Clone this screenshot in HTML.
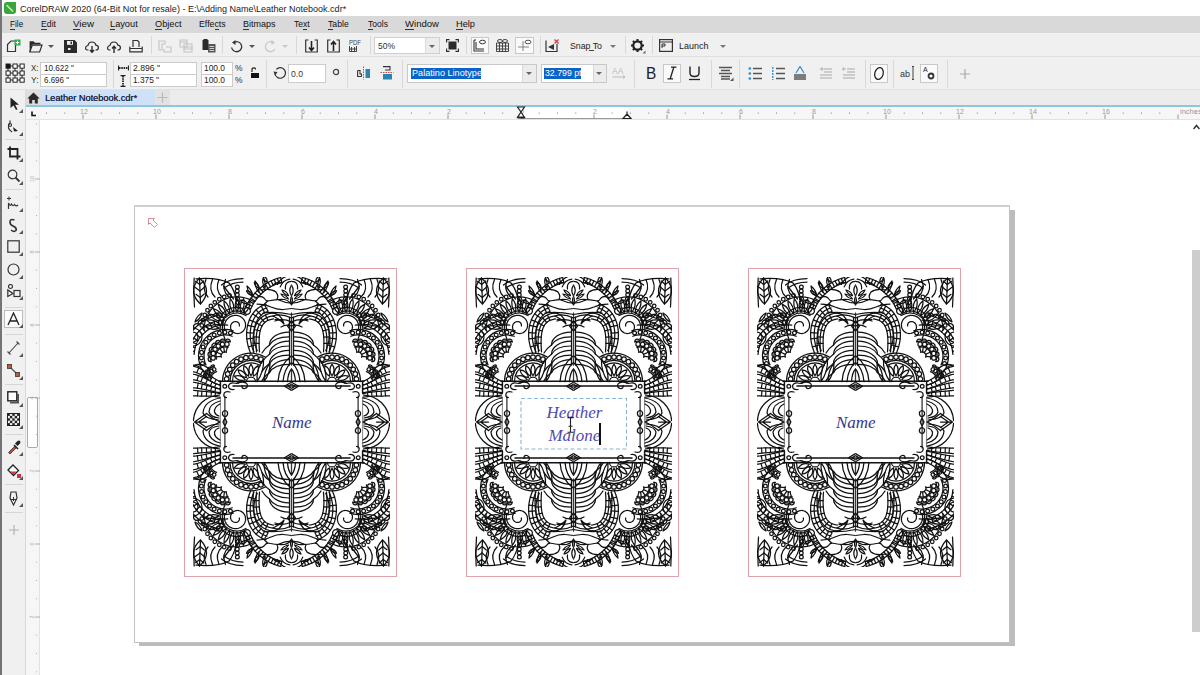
<!DOCTYPE html><html><head><meta charset="utf-8"><style>
*{margin:0;padding:0;box-sizing:border-box}
html,body{width:1200px;height:675px;overflow:hidden;background:#fff;font-family:"Liberation Sans",sans-serif;color:#222}
.a{position:absolute}
.t{position:absolute;white-space:nowrap;line-height:1}
.sep{position:absolute;width:1px;background:#d8d8d8}
.dd{width:0;height:0;border-left:3.5px solid transparent;border-right:3.5px solid transparent;border-top:3.5px solid #555}
.field{position:absolute;background:#fff;border:1px solid #cbcbcb;font-size:9.5px;color:#333;padding-left:3px;line-height:11px;white-space:nowrap}
.menu span{position:absolute;top:4px;font-size:9px;color:#111;line-height:1}
.menu u{text-decoration:none;border-bottom:1px solid #111;display:inline-block;line-height:7px}
</style></head><body>
<div class="a" style="left:0;top:0;width:1200px;height:16px;background:#fff"></div>
<svg class="a" style="left:4px;top:2px" width="12" height="12"><path d="M0 3Q0 0 3 0H12V9Q12 12 9 12H3Q0 12 0 9Z" fill="#3aa63a"/><path d="M3 3.5L8.5 9" stroke="#c9f0c2" stroke-width="1.6" stroke-linecap="round"/></svg>
<div class="t" style="left:20.0px;top:4.58px;font-size:9.00px;color:#222;transform:scaleX(1.001);transform-origin:0 0;">CorelDRAW 2020 (64-Bit Not for resale) - E:\Adding Name\Leather Notebook.cdr*</div>
<div class="a" style="left:0;top:16px;width:1200px;height:17px;background:#d9d9d9"></div>
<div class="t" style="left:10.0px;top:20.28px;font-size:9.00px;color:#111;transform:scaleX(0.917);transform-origin:0 0;">File</div>
<div class="a" style="left:10.0px;top:29px;width:5.0px;height:1px;background:#333"></div>
<div class="t" style="left:41.0px;top:20.28px;font-size:9.00px;color:#111;transform:scaleX(0.967);transform-origin:0 0;">Edit</div>
<div class="a" style="left:41.0px;top:29px;width:5.8px;height:1px;background:#333"></div>
<div class="t" style="left:73.0px;top:20.28px;font-size:9.00px;color:#111;transform:scaleX(1.086);transform-origin:0 0;">View</div>
<div class="a" style="left:73.0px;top:29px;width:6.5px;height:1px;background:#333"></div>
<div class="t" style="left:110.0px;top:20.28px;font-size:9.00px;color:#111;transform:scaleX(1.025);transform-origin:0 0;">Layout</div>
<div class="a" style="left:110.0px;top:29px;width:5.1px;height:1px;background:#333"></div>
<div class="t" style="left:155.0px;top:20.28px;font-size:9.00px;color:#111;transform:scaleX(1.026);transform-origin:0 0;">Object</div>
<div class="a" style="left:155.0px;top:29px;width:7.2px;height:1px;background:#333"></div>
<div class="t" style="left:199.0px;top:20.28px;font-size:9.00px;color:#111;transform:scaleX(0.976);transform-origin:0 0;">Effects</div>
<div class="a" style="left:214.5px;top:29px;width:4.4px;height:1px;background:#333"></div>
<div class="t" style="left:243.0px;top:20.28px;font-size:9.00px;color:#111;transform:scaleX(0.997);transform-origin:0 0;">Bitmaps</div>
<div class="a" style="left:243.0px;top:29px;width:6.0px;height:1px;background:#333"></div>
<div class="t" style="left:294.0px;top:20.28px;font-size:9.00px;color:#111;transform:scaleX(0.951);transform-origin:0 0;">Text</div>
<div class="a" style="left:303.0px;top:29px;width:4.3px;height:1px;background:#333"></div>
<div class="t" style="left:328.0px;top:20.28px;font-size:9.00px;color:#111;transform:scaleX(0.962);transform-origin:0 0;">Table</div>
<div class="a" style="left:328.0px;top:29px;width:5.3px;height:1px;background:#333"></div>
<div class="t" style="left:367.5px;top:20.28px;font-size:9.00px;color:#111;transform:scaleX(0.952);transform-origin:0 0;">Tools</div>
<div class="a" style="left:367.5px;top:29px;width:5.2px;height:1px;background:#333"></div>
<div class="t" style="left:405.0px;top:20.28px;font-size:9.00px;color:#111;transform:scaleX(1.062);transform-origin:0 0;">Window</div>
<div class="a" style="left:405.0px;top:29px;width:9.0px;height:1px;background:#333"></div>
<div class="t" style="left:456.0px;top:20.28px;font-size:9.00px;color:#111;transform:scaleX(1.026);transform-origin:0 0;">Help</div>
<div class="a" style="left:456.0px;top:29px;width:6.7px;height:1px;background:#333"></div>
<div class="a" style="left:0;top:33px;width:1200px;height:24px;background:#f0f0f0;border-bottom:1px solid #dedede"></div>
<svg class="a" style="left:6px;top:39px" width="16" height="14"><path d="M1.5 5.5L5 2H9.5V12.5H1.5Z" fill="none" stroke="#333" stroke-width="1.2"/><rect x="8.5" y="0.5" width="6" height="6" fill="#2faa4a"/><path d="M11.5 1.8V5.2M9.8 3.5H13.2" stroke="#fff" stroke-width="1.1"/></svg>
<svg class="a" style="left:29px;top:40px" width="14" height="13"><path d="M0.6 12V1.2H4.5L6 2.8H11.5V4.5H3L0.6 12Z" fill="#2a2a2a"/><path d="M0.8 12L3.2 5.2H13L10.6 12Z" fill="none" stroke="#2a2a2a" stroke-width="1.2"/></svg>
<div class="a dd" style="left:48px;top:45px"></div>
<svg class="a" style="left:64px;top:40px" width="13" height="13"><path d="M0 0H10.5L13 2.5V13H0Z" fill="#2a2a2a"/><rect x="3" y="1" width="6" height="3.8" fill="#f0f0f0"/><rect x="6.5" y="1.6" width="1.5" height="2.4" fill="#2a2a2a"/><rect x="4" y="8" width="2.5" height="2" fill="#f0f0f0"/></svg>
<svg class="a" style="left:85px;top:40px" width="14" height="13"><path d="M3.5 10H2.5Q0.5 10 0.6 7.7Q0.8 5.6 3 5.5Q3.6 2 7 2Q10.2 2 10.8 5.2Q13.4 5.4 13.4 7.7Q13.3 10 11 10H10.5" fill="none" stroke="#2a2a2a" stroke-width="1.2"/><path d="M7 6V12M5 10L7 12.3L9 10" fill="none" stroke="#2a2a2a" stroke-width="1.4"/></svg>
<svg class="a" style="left:107px;top:40px" width="14" height="13"><path d="M3.5 10H2.5Q0.5 10 0.6 7.7Q0.8 5.6 3 5.5Q3.6 2 7 2Q10.2 2 10.8 5.2Q13.4 5.4 13.4 7.7Q13.3 10 11 10H10.5" fill="none" stroke="#2a2a2a" stroke-width="1.2"/><path d="M7 13V6.5M5 8.5L7 6.2L9 8.5" fill="none" stroke="#2a2a2a" stroke-width="1.4"/></svg>
<svg class="a" style="left:129px;top:39px" width="14" height="14"><path d="M4 8V1.5H8.5L10 3V8" fill="none" stroke="#333" stroke-width="1.2"/><path d="M0.8 7.5V12.8H13.2V7.5M0.8 9.5H13.2" fill="none" stroke="#333" stroke-width="1.2"/></svg>
<div class="sep" style="left:151px;top:36px;height:18px"></div>
<svg class="a" style="left:158px;top:40px" width="14" height="13"><path d="M1 1H7V4H4V10H1ZM8 7H13V12H6V9" fill="none" stroke="#c4c4c4" stroke-width="1.1"/></svg>
<svg class="a" style="left:179px;top:39px" width="14" height="14"><path d="M1 1H8V8H1ZM5 5H13V13H5Z" fill="none" stroke="#c4c4c4" stroke-width="1.1"/><path d="M1 3H8M5 8H13M5 10H13" stroke="#c4c4c4"/></svg>
<svg class="a" style="left:202px;top:39px" width="14" height="14"><rect x="0.5" y="1" width="6" height="10" rx="0.5" fill="#2a2a2a"/><rect x="1.5" y="0" width="4" height="2" fill="#2a2a2a"/><rect x="6" y="5" width="7.5" height="8.5" fill="#555"/><path d="M7.5 7.5H12M7.5 9.5H12M7.5 11.5H12" stroke="#eee" stroke-width="0.8"/></svg>
<div class="sep" style="left:222px;top:36px;height:18px"></div>
<svg class="a" style="left:230px;top:39px" width="14" height="14"><path d="M4.5 3.2A5 5 0 1 1 2.2 10" fill="none" stroke="#333" stroke-width="1.3" stroke-dasharray="20 0"/><path d="M2 3.5L5.5 1L5.5 6Z" fill="#333"/><path d="M1.5 8.5L2.2 10" stroke="#333" stroke-width="1.2"/></svg>
<div class="a dd" style="left:249px;top:45px"></div>
<svg class="a" style="left:263px;top:39px" width="14" height="14"><path d="M9.5 3.2A5 5 0 1 0 11.8 10" fill="none" stroke="#c8c8c8" stroke-width="1.3"/><path d="M12 3.5L8.5 1L8.5 6Z" fill="#c8c8c8"/></svg>
<div class="a dd" style="left:282px;top:45px;border-top-color:#c8c8c8"></div>
<div class="sep" style="left:296px;top:36px;height:18px"></div>
<svg class="a" style="left:305px;top:39px" width="13" height="14"><path d="M3.5 1H0.7V13H12.3V1H9.5" fill="none" stroke="#333" stroke-width="1.2"/><path d="M6.5 2V11M4 8.5L6.5 11.5L9 8.5" fill="none" stroke="#222" stroke-width="1.6"/></svg>
<svg class="a" style="left:327px;top:39px" width="13" height="14"><path d="M3.5 1H0.7V13H12.3V1H9.5" fill="none" stroke="#333" stroke-width="1.2"/><path d="M6.5 12V3M4 5.5L6.5 2.5L9 5.5" fill="none" stroke="#222" stroke-width="1.6"/></svg>
<div class="t" style="left:348.5px;top:39.50px;font-size:6.50px;color:#444;transform:scaleX(0.923);transform-origin:0 0;">PDF</div>
<svg class="a" style="left:349px;top:46px" width="8" height="6"><path d="M0.5 0V5.5H7.5V0M2.5 1V5M5.5 1V5M0.5 3H7.5" fill="none" stroke="#444" stroke-width="1"/></svg>
<div class="sep" style="left:370px;top:36px;height:18px"></div>
<div class="a" style="left:374px;top:37px;width:66px;height:17px;background:#fff;border:1px solid #cfcfcf"></div>
<div class="a" style="left:425px;top:38px;width:14px;height:15px;background:#ececec;border-left:1px solid #dcdcdc"></div>
<div class="a dd" style="left:429px;top:45px;border-top-color:#666"></div>
<div class="t" style="left:377.5px;top:40.76px;font-size:9.50px;color:#333;transform:scaleX(0.894);transform-origin:0 0;">50%</div>
<svg class="a" style="left:446px;top:39px" width="13" height="13"><rect x="2.5" y="2.5" width="8" height="8" fill="#2a2a2a"/><path d="M0.6 3.5V0.6H3.5M9.5 0.6H12.4V3.5M12.4 9.5V12.4H9.5M3.5 12.4H0.6V9.5" fill="none" stroke="#2a2a2a" stroke-width="1.1"/></svg>
<div class="sep" style="left:466px;top:36px;height:18px"></div>
<div class="a" style="left:471px;top:37px;width:18px;height:17px;border:1px solid #c8c8c8;background:#fafafa"></div>
<svg class="a" style="left:473px;top:39px" width="14" height="13"><path d="M1 1V12H11M3 3V10H11M1 1H3" fill="none" stroke="#333" stroke-width="1.1"/><ellipse cx="9.5" cy="3" rx="3" ry="1.8" fill="none" stroke="#333"/></svg>
<svg class="a" style="left:496px;top:39px" width="13" height="13"><path d="M0.5 4H12.5M0.5 7H12.5M0.5 10H12.5M3.5 4V12.5M6.5 4V12.5M9.5 4V12.5M0.5 4V12.5H12.5V4" fill="none" stroke="#444" stroke-width="1"/><ellipse cx="4" cy="2" rx="2.5" ry="1.5" fill="none" stroke="#444"/><ellipse cx="9" cy="2" rx="2.5" ry="1.5" fill="none" stroke="#444"/></svg>
<div class="a" style="left:515px;top:37px;width:19px;height:17px;border:1px solid #c8c8c8;background:#fafafa"></div>
<svg class="a" style="left:517px;top:39px" width="15" height="13"><path d="M6 2V12M1 8H12" fill="none" stroke="#777" stroke-width="0.9"/><ellipse cx="11" cy="3" rx="3" ry="1.8" fill="none" stroke="#555"/></svg>
<div class="sep" style="left:540px;top:36px;height:18px"></div>
<svg class="a" style="left:545px;top:39px" width="15" height="14"><path d="M1 1.5V12.5H12V5" fill="none" stroke="#333" stroke-width="1.2"/><path d="M3 8L9 5V11Z" fill="#333"/><path d="M9.5 0.5L13.5 4.5M13.5 0.5L9.5 4.5" stroke="#e03030" stroke-width="1.2"/></svg>
<div class="t" style="left:570.0px;top:41.16px;font-size:9.50px;color:#222;transform:scaleX(0.922);transform-origin:0 0;">Snap To</div>
<div class="a" style="left:589px;top:50px;width:5px;height:1px;background:#444"></div>
<div class="a dd" style="left:609.5px;top:45px;border-top-color:#777"></div>
<div class="sep" style="left:625px;top:36px;height:18px"></div>
<svg class="a" style="left:630px;top:38px" width="16" height="16"><circle cx="7.5" cy="7.5" r="4.2" fill="none" stroke="#222" stroke-width="2.2"/><path d="M7.5 1V3M7.5 12V14M1 7.5H3M12 7.5H14M2.9 2.9L4.3 4.3M10.7 10.7L12.1 12.1M2.9 12.1L4.3 10.7M10.7 4.3L12.1 2.9" stroke="#222" stroke-width="2"/><path d="M15.5 12.5V15.5H12.5Z" fill="#666"/></svg>
<div class="sep" style="left:652px;top:36px;height:18px"></div>
<svg class="a" style="left:659px;top:39px" width="14" height="13"><rect x="0.6" y="0.6" width="12.8" height="11.8" fill="none" stroke="#333" stroke-width="1.2"/><path d="M0.6 3H13.4M3 5V9M3 5H6V7H3" fill="none" stroke="#333" stroke-width="1"/></svg>
<div class="t" style="left:678.5px;top:41.16px;font-size:9.50px;color:#222;transform:scaleX(0.946);transform-origin:0 0;">Launch</div>
<div class="a dd" style="left:720px;top:45px;border-top-color:#777"></div>
<div class="a" style="left:0;top:57px;width:1200px;height:33px;background:#f0f0f0;border-bottom:1px solid #e2e2e2"></div>
<svg class="a" style="left:5px;top:63px" width="21" height="21"><rect x="1" y="1" width="4.2" height="4.2" fill="#111" stroke="#222" stroke-width="1"/><rect x="1" y="8" width="4.2" height="4.2" fill="#fff" stroke="#222" stroke-width="1"/><rect x="1" y="15" width="4.2" height="4.2" fill="#fff" stroke="#222" stroke-width="1"/><rect x="8" y="1" width="4.2" height="4.2" fill="#fff" stroke="#222" stroke-width="1"/><rect x="8" y="8" width="4.2" height="4.2" fill="#fff" stroke="#222" stroke-width="1"/><rect x="8" y="15" width="4.2" height="4.2" fill="#fff" stroke="#222" stroke-width="1"/><rect x="15" y="1" width="4.2" height="4.2" fill="#fff" stroke="#222" stroke-width="1"/><rect x="15" y="8" width="4.2" height="4.2" fill="#fff" stroke="#222" stroke-width="1"/><rect x="15" y="15" width="4.2" height="4.2" fill="#fff" stroke="#222" stroke-width="1"/><path d="M5.2 3H8M12.2 3H15M5.2 10H8M12.2 10H15M5.2 17H8M12.2 17H15M3 5.2V8M3 12.2V15M10 5.2V8M10 12.2V15M17 5.2V8M17 12.2V15" stroke="#222" stroke-width="1"/></svg>
<div class="t" style="left:31.0px;top:63.83px;font-size:9.30px;color:#333;transform:scaleX(0.854);transform-origin:0 0;">X:</div>
<div class="t" style="left:31.0px;top:75.83px;font-size:9.30px;color:#333;transform:scaleX(0.906);transform-origin:0 0;">Y:</div>
<div class="field" style="left:40px;top:62px;width:67px;height:13px"></div>
<div class="t" style="left:44.0px;top:63.83px;font-size:9.30px;color:#222;transform:scaleX(0.874);transform-origin:0 0;">10.622 &quot;</div>
<div class="field" style="left:40px;top:74px;width:67px;height:13px"></div>
<div class="t" style="left:44.0px;top:75.83px;font-size:9.30px;color:#222;transform:scaleX(0.857);transform-origin:0 0;">6.696 &quot;</div>
<div class="sep" style="left:113px;top:60px;height:28px"></div>
<svg class="a" style="left:118px;top:65px" width="11" height="6"><path d="M0.5 0.5V5.5M10.5 0.5V5.5" stroke="#222" stroke-width="1.2"/><path d="M1 3H10" stroke="#222" stroke-width="1.8" stroke-dasharray="1.5 0.8"/></svg>
<svg class="a" style="left:120px;top:75px" width="6" height="12"><path d="M0.5 0.6H5.5M0.5 11.4H5.5" stroke="#222" stroke-width="1.2"/><path d="M3 1V11" stroke="#222" stroke-width="1.8" stroke-dasharray="1.5 0.8"/></svg>
<div class="field" style="left:130px;top:62px;width:67px;height:13px"></div>
<div class="t" style="left:133.0px;top:63.83px;font-size:9.30px;color:#222;transform:scaleX(0.926);transform-origin:0 0;">2.896 &quot;</div>
<div class="field" style="left:130px;top:74px;width:67px;height:13px"></div>
<div class="t" style="left:133.0px;top:75.83px;font-size:9.30px;color:#222;transform:scaleX(0.892);transform-origin:0 0;">1.375 &quot;</div>
<div class="field" style="left:201px;top:62px;width:32px;height:13px"></div>
<div class="t" style="left:204.0px;top:63.83px;font-size:9.30px;color:#222;transform:scaleX(0.902);transform-origin:0 0;">100.0</div>
<div class="field" style="left:201px;top:74px;width:32px;height:13px"></div>
<div class="t" style="left:204.0px;top:75.83px;font-size:9.30px;color:#222;transform:scaleX(0.902);transform-origin:0 0;">100.0</div>
<div class="t" style="left:235.0px;top:63.83px;font-size:9.30px;color:#333;transform:scaleX(0.907);transform-origin:0 0;">%</div>
<div class="t" style="left:235.0px;top:75.83px;font-size:9.30px;color:#333;transform:scaleX(0.907);transform-origin:0 0;">%</div>
<svg class="a" style="left:250px;top:67px" width="10" height="12"><path d="M2 5V2.5Q2 0.8 3.8 0.8Q5.6 0.8 5.6 2.5" fill="none" stroke="#222" stroke-width="1.2"/><rect x="1" y="6" width="8" height="5" fill="#111"/></svg>
<div class="sep" style="left:266px;top:60px;height:28px"></div>
<svg class="a" style="left:273px;top:66px" width="15" height="14"><path d="M3.3 3.3A5.3 5.3 0 1 1 2 8" fill="none" stroke="#333" stroke-width="1.2"/><path d="M0.5 5.5L2 9.5L4.5 6Z" fill="#333"/></svg>
<div class="field" style="left:288px;top:64px;width:38px;height:19px"></div>
<div class="t" style="left:291.0px;top:69.63px;font-size:9.30px;color:#333;transform:scaleX(0.928);transform-origin:0 0;">0.0</div>
<svg class="a" style="left:332px;top:68px" width="8" height="8"><circle cx="4" cy="4" r="2.6" fill="none" stroke="#444" stroke-width="1.2"/></svg>
<div class="sep" style="left:347px;top:60px;height:28px"></div>
<svg class="a" style="left:357px;top:66px" width="14" height="14"><path d="M0.6 4.5V10.5H4.5M0.6 4.5H3V8H4.5V10.5" fill="none" stroke="#333" stroke-width="1.1"/><rect x="8.5" y="3" width="4.5" height="9" fill="#2a86b0"/><path d="M6.5 0.5V13.5" stroke="#d04040" stroke-width="1" stroke-dasharray="1.5 1"/></svg>
<svg class="a" style="left:380px;top:66px" width="14" height="14"><path d="M3 0.6H10V4H5" fill="none" stroke="#333" stroke-width="1.1"/><rect x="3" y="8" width="9" height="5.5" fill="#2a86b0"/><path d="M0.5 6.5H13.5" stroke="#d04040" stroke-width="1" stroke-dasharray="1.5 1"/></svg>
<div class="sep" style="left:402px;top:60px;height:28px"></div>
<div class="a" style="left:407px;top:64px;width:130px;height:19px;background:#fff;border:1px solid #c8c8c8"></div>
<div class="a" style="left:522px;top:65px;width:14px;height:17px;background:#ececec;border-left:1px solid #d8d8d8"></div>
<div class="a dd" style="left:526px;top:72px;border-top-color:#666"></div>
<div class="a" style="left:411px;top:68px;width:70px;height:11px;background:#0a64c8"></div>
<div class="t" style="left:411.5px;top:68.26px;font-size:9.50px;color:#fff;transform:scaleX(0.960);transform-origin:0 0;">Palatino Linotype</div>
<div class="a" style="left:541px;top:64px;width:66px;height:19px;background:#fff;border:1px solid #c8c8c8"></div>
<div class="a" style="left:593px;top:65px;width:13px;height:17px;background:#ececec;border-left:1px solid #d8d8d8"></div>
<div class="a dd" style="left:596px;top:72px;border-top-color:#666"></div>
<div class="a" style="left:544px;top:68px;width:37px;height:11px;background:#0a64c8"></div>
<div class="t" style="left:544.5px;top:68.26px;font-size:9.50px;color:#fff;transform:scaleX(0.921);transform-origin:0 0;">32.799 pt</div>
<svg class="a" style="left:612px;top:66px" width="16" height="14"><text x="0" y="8" font-family="Liberation Sans" font-size="8.5" fill="#bbb">AA</text><path d="M0.5 11H13M11 9.5L13 11L11 12.5" fill="none" stroke="#bbb"/></svg>
<div class="sep" style="left:634px;top:60px;height:28px"></div>
<div class="t" style="left:645.5px;top:66.06px;font-size:16.00px;color:#222;transform:scaleX(0.965);transform-origin:0 0;">B</div>
<div class="a" style="left:663px;top:64px;width:18px;height:19px;border:1px solid #c8c8c8;background:#fafafa"></div>
<svg class="a" style="left:665px;top:66px" width="14" height="14"><path d="M6 1.2H11.5M2.5 12.8H8M8.8 1.2L5.2 12.8" stroke="#222" stroke-width="1.3"/></svg>
<svg class="a" style="left:688px;top:66px" width="13" height="15"><path d="M2 0.5V7Q2 10.5 6.5 10.5Q11 10.5 11 7V0.5" fill="none" stroke="#222" stroke-width="1.4"/><path d="M1 13.5H12" stroke="#222" stroke-width="1.3"/></svg>
<div class="sep" style="left:711px;top:60px;height:28px"></div>
<svg class="a" style="left:718px;top:66px" width="16" height="15"><path d="M1 1.5H14M3 4.5H12M1 7.5H14M3 10.5H12M3 13H12" stroke="#555" stroke-width="1.6"/><path d="M15.5 11.5V15.5H11.5Z" fill="#555"/></svg>
<div class="sep" style="left:739px;top:60px;height:28px"></div>
<svg class="a" style="left:748px;top:67px" width="15" height="13"><path d="M5 1.5H14M5 6.5H14M5 11.5H14" stroke="#555" stroke-width="1.4"/><circle cx="1.8" cy="1.5" r="1.3" fill="#2a8ad0"/><circle cx="1.8" cy="6.5" r="1.3" fill="#2a8ad0"/><circle cx="1.8" cy="11.5" r="1.3" fill="#2a8ad0"/></svg>
<svg class="a" style="left:771px;top:67px" width="15" height="13"><path d="M5 1.5H14M5 6.5H14M5 11.5H14" stroke="#555" stroke-width="1.4"/><path d="M1.8 0V13" stroke="#2a8ad0" stroke-width="1.3" stroke-dasharray="2 1"/></svg>
<svg class="a" style="left:793px;top:66px" width="14" height="15"><path d="M1 9H13M1 11H13M1 13H13" stroke="#555" stroke-width="1.6"/><path d="M3 7L7 0.5L11 7" fill="none" stroke="#2a8ad0" stroke-width="1.2"/></svg>
<svg class="a" style="left:819px;top:67px" width="14" height="14"><path d="M5 2H13M5 5H13M1 8H13M1 11H13" stroke="#c0c0c0" stroke-width="1.6"/><path d="M0.5 2H3.5M2.5 0.5L4 2L2.5 3.5" fill="none" stroke="#b8b8b8" stroke-width="1.2"/></svg>
<svg class="a" style="left:842px;top:67px" width="14" height="14"><path d="M5 2H13M5 5H13M1 8H13M1 11H13" stroke="#c0c0c0" stroke-width="1.6"/><path d="M4 2H1M2 0.5L0.5 2L2 3.5" fill="none" stroke="#b8b8b8" stroke-width="1.2"/></svg>
<div class="sep" style="left:865px;top:60px;height:28px"></div>
<div class="a" style="left:870px;top:64px;width:18px;height:19px;border:1px solid #c8c8c8;background:#fafafa"></div>
<svg class="a" style="left:872px;top:66px" width="14" height="15"><ellipse cx="7" cy="7.5" rx="4.2" ry="6" transform="rotate(15 7 7.5)" fill="none" stroke="#222" stroke-width="1.3"/></svg>
<div class="sep" style="left:893px;top:60px;height:28px"></div>
<div class="t" style="left:900.0px;top:70.30px;font-size:8.50px;color:#333;transform:scaleX(1.058);transform-origin:0 0;">ab</div>
<svg class="a" style="left:911px;top:66px" width="4" height="14"><path d="M1 0.5H3M2 0.5V13.5M1 13.5H3" stroke="#444" stroke-width="1"/></svg>
<div class="a" style="left:920px;top:64px;width:18px;height:19px;border:1px solid #c8c8c8;background:#fafafa"></div>
<div class="t" style="left:923.0px;top:66.07px;font-size:7.00px;color:#222;">A</div>
<svg class="a" style="left:927px;top:72px" width="8" height="8"><circle cx="4" cy="4" r="2.5" fill="none" stroke="#333" stroke-width="1.8"/></svg>
<div class="sep" style="left:947px;top:60px;height:28px"></div>
<svg class="a" style="left:960px;top:69px" width="10" height="10"><path d="M5 0V10M0 5H10" stroke="#aaa" stroke-width="1.2"/></svg>
<div class="a" style="left:26px;top:90px;width:1174px;height:16px;background:#ececec"></div>
<div class="a" style="left:26px;top:90px;width:15px;height:16px;background:#dedede"></div>
<svg class="a" style="left:27px;top:92px" width="13" height="12"><path d="M6.5 0.5L0.3 6.5H2.2V11.5H5.2V8H7.8V11.5H10.8V6.5H12.7Z" fill="#2a2a2a"/></svg>
<div class="a" style="left:41px;top:90px;width:114px;height:16px;background:#cfe1f6"></div>
<div class="t" style="left:45.0px;top:93.26px;font-size:9.50px;color:#1c2848;transform:scaleX(0.968);transform-origin:0 0;text-shadow:0.2px 0 0 #1c2848;">Leather Notebook.cdr*</div>
<div class="a" style="left:155px;top:90px;width:15px;height:16px;background:#e2e2e2"></div>
<svg class="a" style="left:157px;top:92px" width="11" height="11"><path d="M5.5 0.5V10.5M0.5 5.5H10.5" stroke="#b8b8b8" stroke-width="1.1"/></svg>
<div class="a" style="left:0;top:90px;width:26px;height:585px;background:#f0f0f0;border-right:1px solid #d9d9d9"></div>
<svg class="a" style="left:7px;top:97px" width="15" height="15"><path d="M3.5 0.5V11L6.5 8.5L9 13L10.5 12.2L8.1 7.8H12Z" fill="#222"/></svg>
<svg class="a" style="left:19px;top:109px" width="4" height="4"><path d="M4 0V4H0Z" fill="#555"/></svg>
<svg class="a" style="left:7px;top:120px" width="15" height="15"><path d="M3 0.5V3M3 3Q1 5 1.5 8Q2 10 5 12" fill="none" stroke="#333" stroke-width="1.2"/><circle cx="3" cy="5" r="1.5" fill="none" stroke="#333" stroke-width="1.2"/><path d="M6 7L11 11L7 11.5Z" fill="#222"/></svg>
<svg class="a" style="left:19px;top:132px" width="4" height="4"><path d="M4 0V4H0Z" fill="#555"/></svg>
<svg class="a" style="left:7px;top:146px" width="15" height="15"><path d="M3 0.5V10.5H13.5M0.5 3H10.5V13.5" fill="none" stroke="#222" stroke-width="1.8"/></svg>
<svg class="a" style="left:19px;top:158px" width="4" height="4"><path d="M4 0V4H0Z" fill="#555"/></svg>
<svg class="a" style="left:7px;top:169px" width="15" height="15"><circle cx="5.5" cy="5.5" r="4.3" fill="none" stroke="#333" stroke-width="1.2"/><path d="M8.5 8.5L12.5 12.5" stroke="#333" stroke-width="1.8"/></svg>
<svg class="a" style="left:19px;top:181px" width="4" height="4"><path d="M4 0V4H0Z" fill="#555"/></svg>
<svg class="a" style="left:7px;top:196px" width="15" height="15"><path d="M2 0.5V4.5M0 2.5H4" stroke="#333" stroke-width="1"/><path d="M1.5 13V7Q3 11 4.5 8Q6 11 7.5 8.5Q9 11 11 9" fill="none" stroke="#333" stroke-width="1.2"/></svg>
<svg class="a" style="left:19px;top:208px" width="4" height="4"><path d="M4 0V4H0Z" fill="#555"/></svg>
<svg class="a" style="left:7px;top:218px" width="15" height="15"><path d="M7.5 2Q3 0.5 3 4Q3 7 6 8Q10 9.5 9 12.5Q7 14.5 4 12" fill="none" stroke="#333" stroke-width="1.6"/></svg>
<svg class="a" style="left:19px;top:230px" width="4" height="4"><path d="M4 0V4H0Z" fill="#555"/></svg>
<svg class="a" style="left:7px;top:240px" width="15" height="15"><rect x="0.8" y="0.8" width="11.4" height="11.4" fill="none" stroke="#333" stroke-width="1.2"/></svg>
<svg class="a" style="left:19px;top:252px" width="4" height="4"><path d="M4 0V4H0Z" fill="#555"/></svg>
<svg class="a" style="left:7px;top:263px" width="15" height="15"><circle cx="6.5" cy="6.5" r="5.5" fill="none" stroke="#333" stroke-width="1.2"/></svg>
<svg class="a" style="left:19px;top:275px" width="4" height="4"><path d="M4 0V4H0Z" fill="#555"/></svg>
<svg class="a" style="left:7px;top:284px" width="15" height="15"><circle cx="3.5" cy="2.5" r="2" fill="none" stroke="#333" stroke-width="1.2"/><path d="M0.8 6V12.5L6 9.5Z" fill="none" stroke="#333" stroke-width="1.2"/><rect x="7" y="6.5" width="6" height="6" fill="none" stroke="#333" stroke-width="1.2"/></svg>
<svg class="a" style="left:19px;top:296px" width="4" height="4"><path d="M4 0V4H0Z" fill="#555"/></svg>
<div class="a" style="left:4px;top:310px;width:19px;height:18px;border:1px solid #bdbdbd;background:#fcfcfc"></div>
<svg class="a" style="left:7px;top:312px" width="14" height="14"><path d="M1 13L6.5 1L12 13M3 9H10" fill="none" stroke="#222" stroke-width="1.3"/></svg>
<svg class="a" style="left:19px;top:324px" width="4" height="4"><path d="M4 0V4H0Z" fill="#555"/></svg>
<svg class="a" style="left:7px;top:341px" width="15" height="15"><path d="M1.5 12.5L11.5 1.5M0.5 10.5L3.5 13.5M9.5 0.5L12.5 3.5" fill="none" stroke="#444" stroke-width="1.1"/></svg>
<svg class="a" style="left:19px;top:353px" width="4" height="4"><path d="M4 0V4H0Z" fill="#555"/></svg>
<svg class="a" style="left:7px;top:364px" width="15" height="15"><path d="M2.5 2.5L10.5 10.5" stroke="#555" stroke-width="1.2"/><rect x="0.5" y="0.5" width="4" height="4" fill="#c05a30" stroke="#333" stroke-width="0.8"/><rect x="8.5" y="8.5" width="4" height="4" fill="#c05a30" stroke="#333" stroke-width="0.8"/></svg>
<svg class="a" style="left:19px;top:376px" width="4" height="4"><path d="M4 0V4H0Z" fill="#555"/></svg>
<svg class="a" style="left:7px;top:391px" width="15" height="15"><rect x="0.8" y="0.8" width="9" height="9" fill="#fff" stroke="#222" stroke-width="1.4"/><path d="M11 3V11.5H3" fill="none" stroke="#555" stroke-width="2"/></svg>
<svg class="a" style="left:19px;top:403px" width="4" height="4"><path d="M4 0V4H0Z" fill="#555"/></svg>
<svg class="a" style="left:7px;top:413px" width="15" height="15"><rect x="0.5" y="0.5" width="2.4" height="2.4" fill="#222"/><rect x="0.5" y="5.3" width="2.4" height="2.4" fill="#222"/><rect x="0.5" y="10.1" width="2.4" height="2.4" fill="#222"/><rect x="2.9" y="2.9" width="2.4" height="2.4" fill="#222"/><rect x="2.9" y="7.699999999999999" width="2.4" height="2.4" fill="#222"/><rect x="5.3" y="0.5" width="2.4" height="2.4" fill="#222"/><rect x="5.3" y="5.3" width="2.4" height="2.4" fill="#222"/><rect x="5.3" y="10.1" width="2.4" height="2.4" fill="#222"/><rect x="7.699999999999999" y="2.9" width="2.4" height="2.4" fill="#222"/><rect x="7.699999999999999" y="7.699999999999999" width="2.4" height="2.4" fill="#222"/><rect x="10.1" y="0.5" width="2.4" height="2.4" fill="#222"/><rect x="10.1" y="5.3" width="2.4" height="2.4" fill="#222"/><rect x="10.1" y="10.1" width="2.4" height="2.4" fill="#222"/><rect x="0.5" y="0.5" width="12" height="12" fill="none" stroke="#222" stroke-width="1"/></svg>
<svg class="a" style="left:19px;top:425px" width="4" height="4"><path d="M4 0V4H0Z" fill="#555"/></svg>
<svg class="a" style="left:7px;top:440px" width="15" height="15"><path d="M1.5 12.5L8 6L9.5 7.5L3 14Z" fill="#c04a3a" stroke="#333" stroke-width="0.8"/><path d="M8 3.5L10.5 1Q12 0 13 1Q14 2 13 3.5L10.5 6Z" fill="#222"/><path d="M7 5L11 9" stroke="#222" stroke-width="1.6"/></svg>
<svg class="a" style="left:19px;top:452px" width="4" height="4"><path d="M4 0V4H0Z" fill="#555"/></svg>
<svg class="a" style="left:7px;top:464px" width="15" height="15"><path d="M1 6L6 1L11.5 6.5L6.5 11.5Z" fill="#fff" stroke="#222" stroke-width="1.3"/><path d="M3.5 7.5H9.5L6.5 10.5Z" fill="#d03040"/><rect x="10" y="10" width="4" height="4" fill="#d03040"/></svg>
<svg class="a" style="left:19px;top:476px" width="4" height="4"><path d="M4 0V4H0Z" fill="#555"/></svg>
<svg class="a" style="left:7px;top:491px" width="15" height="15"><path d="M4 1H9L10 7L6.5 14L3 7Z" fill="none" stroke="#333" stroke-width="1.2"/><path d="M6.5 6V10M3 8.5H10" stroke="#333" stroke-width="1"/></svg>
<svg class="a" style="left:19px;top:503px" width="4" height="4"><path d="M4 0V4H0Z" fill="#555"/></svg>
<svg class="a" style="left:9px;top:525px" width="10" height="10"><path d="M5 0V10M0 5H10" stroke="#b0b0b0" stroke-width="1.1"/></svg>
<div class="a" style="left:5px;top:139px;width:18px;height:1px;background:#d6d6d6"></div>
<div class="a" style="left:5px;top:189px;width:18px;height:1px;background:#d6d6d6"></div>
<div class="a" style="left:5px;top:307px;width:18px;height:1px;background:#d6d6d6"></div>
<div class="a" style="left:5px;top:334px;width:18px;height:1px;background:#d6d6d6"></div>
<div class="a" style="left:5px;top:384px;width:18px;height:1px;background:#d6d6d6"></div>
<div class="a" style="left:5px;top:434px;width:18px;height:1px;background:#d6d6d6"></div>
<div class="a" style="left:5px;top:484px;width:18px;height:1px;background:#d6d6d6"></div>
<div class="a" style="left:5px;top:512px;width:18px;height:1px;background:#d6d6d6"></div>
<div class="a" style="left:26px;top:105px;width:1174px;height:2px;background:#8fc6de"></div>
<div class="a" style="left:26px;top:107px;width:1174px;height:13px;background:#f6f6f6;border-bottom:1px solid #e2e2e2"></div>
<div class="a" style="left:521px;top:107px;width:106px;height:12px;background:#fff;border-bottom:1px solid #999"></div>
<svg class="a" style="left:40px;top:107px" width="1160" height="13">
<path d="M6.5 5.5V6.8M24.8 5.5V6.8M43.0 7.5V12M61.2 5.5V6.8M79.5 5.5V6.8M97.8 5.5V6.8M116.0 7.5V12M134.2 5.5V6.8M152.5 5.5V6.8M170.8 5.5V6.8M189.0 7.5V12M207.2 5.5V6.8M225.5 5.5V6.8M243.8 5.5V6.8M262.0 7.5V12M280.2 5.5V6.8M298.5 5.5V6.8M316.8 5.5V6.8M335.0 7.5V12M353.2 5.5V6.8M371.5 5.5V6.8M389.8 5.5V6.8M408.0 7.5V12M426.2 5.5V6.8M444.5 5.5V6.8M462.8 5.5V6.8M481.0 7.5V12M499.2 5.5V6.8M517.5 5.5V6.8M535.8 5.5V6.8M554.0 7.5V12M572.2 5.5V6.8M590.5 5.5V6.8M608.8 5.5V6.8M627.0 7.5V12M645.2 5.5V6.8M663.5 5.5V6.8M681.8 5.5V6.8M700.0 7.5V12M718.2 5.5V6.8M736.5 5.5V6.8M754.8 5.5V6.8M773.0 7.5V12M791.2 5.5V6.8M809.5 5.5V6.8M827.8 5.5V6.8M846.0 7.5V12M864.2 5.5V6.8M882.5 5.5V6.8M900.8 5.5V6.8M919.0 7.5V12M937.2 5.5V6.8M955.5 5.5V6.8M973.8 5.5V6.8M992.0 7.5V12M1010.2 5.5V6.8M1028.5 5.5V6.8M1046.8 5.5V6.8M1065.0 7.5V12M1083.2 5.5V6.8M1101.5 5.5V6.8M1119.8 5.5V6.8M1138.0 7.5V12M1156.2 5.5V6.8" stroke="#8a8a8a" stroke-width="0.9"/>
<text x="44.0" y="7" font-size="7" text-anchor="middle" fill="#9a9a9a">12</text><text x="117.0" y="7" font-size="7" text-anchor="middle" fill="#9a9a9a">10</text><text x="190.0" y="7" font-size="7" text-anchor="middle" fill="#9a9a9a">8</text><text x="263.0" y="7" font-size="7" text-anchor="middle" fill="#9a9a9a">6</text><text x="336.0" y="7" font-size="7" text-anchor="middle" fill="#9a9a9a">4</text><text x="409.0" y="7" font-size="7" text-anchor="middle" fill="#9a9a9a">2</text><text x="482.0" y="7" font-size="7" text-anchor="middle" fill="#9a9a9a">0</text><text x="555.0" y="7" font-size="7" text-anchor="middle" fill="#9a9a9a">2</text><text x="628.0" y="7" font-size="7" text-anchor="middle" fill="#9a9a9a">4</text><text x="701.0" y="7" font-size="7" text-anchor="middle" fill="#9a9a9a">6</text><text x="774.0" y="7" font-size="7" text-anchor="middle" fill="#9a9a9a">8</text><text x="847.0" y="7" font-size="7" text-anchor="middle" fill="#9a9a9a">10</text><text x="920.0" y="7" font-size="7" text-anchor="middle" fill="#9a9a9a">12</text><text x="993.0" y="7" font-size="7" text-anchor="middle" fill="#9a9a9a">14</text><text x="1066.0" y="7" font-size="7" text-anchor="middle" fill="#9a9a9a">16</text>
<text x="1140" y="7" font-size="7.5" fill="#9a9a9a">inches</text>
</svg>
<svg class="a" style="left:516px;top:106px" width="14" height="14"><path d="M1.5 1H8.5L5 6L8.5 11.5H1.5L5 6Z" fill="#fff" stroke="#222" stroke-width="1.2"/><path d="M1.5 11.5H8.5" stroke="#222" stroke-width="2"/></svg>
<svg class="a" style="left:621px;top:111px" width="12" height="9"><path d="M6 0.5V3M2 7.5L6 3L10 7.5Z" fill="#fff" stroke="#222" stroke-width="1.2"/></svg>
<div class="a" style="left:26px;top:120px;width:14px;height:555px;background:#f6f6f6;border-right:1px solid #e2e2e2"></div>
<div class="a" style="left:27px;top:397px;width:11px;height:51px;background:#fff;border:1px solid #aaa;border-radius:2px"></div>
<svg class="a" style="left:26px;top:120px" width="14" height="555">
<path d="M10 4.2H11M10 22.5H11M10 40.8H11M9 59.0H14M10 77.2H11M10 95.5H11M10 113.8H11M9 132.0H14M10 150.2H11M10 168.5H11M10 186.8H11M9 205.0H14M10 223.2H11M10 241.5H11M10 259.8H11M9 278.0H14M10 296.2H11M10 314.5H11M10 332.8H11M9 351.0H14M10 369.2H11M10 387.5H11M10 405.8H11M9 424.0H14M10 442.2H11M10 460.5H11M10 478.8H11M9 497.0H14M10 515.2H11M10 533.5H11M10 551.8H11" stroke="#a8a8a8" stroke-width="0.9"/>
<text x="0" y="0" font-size="5.5" fill="#aaaaaa" transform="translate(7.5 59.0) rotate(-90)" text-anchor="middle">10</text><text x="0" y="0" font-size="5.5" fill="#aaaaaa" transform="translate(7.5 132.0) rotate(-90)" text-anchor="middle">8</text><text x="0" y="0" font-size="5.5" fill="#aaaaaa" transform="translate(7.5 205.0) rotate(-90)" text-anchor="middle">6</text><text x="0" y="0" font-size="5.5" fill="#aaaaaa" transform="translate(7.5 278.0) rotate(-90)" text-anchor="middle">4</text><text x="0" y="0" font-size="5.5" fill="#aaaaaa" transform="translate(7.5 351.0) rotate(-90)" text-anchor="middle">2</text><text x="0" y="0" font-size="5.5" fill="#aaaaaa" transform="translate(7.5 424.0) rotate(-90)" text-anchor="middle">0</text><text x="0" y="0" font-size="5.5" fill="#aaaaaa" transform="translate(7.5 497.0) rotate(-90)" text-anchor="middle">2</text>
</svg>
<svg class="a" style="left:31px;top:111px" width="6" height="6"><path d="M1 0.5V4.5H5" fill="none" stroke="#111" stroke-width="1.6"/></svg>
<div class="a" style="left:0;top:0;width:2px;height:675px;background:#747478"></div>
<div class="a" style="left:139px;top:210px;width:876px;height:436px;background:#bcbcbc"></div>
<div class="a" style="left:134px;top:205px;width:876px;height:438px;background:#fff;border:1px solid #c2c2c2;border-top:2px solid #cfcfcf"></div>
<svg class="a" style="left:147px;top:217px" width="14" height="14"><path d="M1.5 1.5H7.5L6 3L10.5 7.5L7.5 10.5L3 6L1.5 7.5Z" fill="none" stroke="#dc8994" stroke-width="1"/></svg>
<div class="a" style="left:184px;top:268px;width:213px;height:309px;border:1px solid #dca3ad"></div>
<div class="a" style="left:466px;top:268px;width:213px;height:309px;border:1px solid #dca3ad"></div>
<div class="a" style="left:748px;top:268px;width:213px;height:309px;border:1px solid #dca3ad"></div>
<svg width="0" height="0" style="position:absolute"><defs>
<clipPath id="qc"><rect x="0" y="0" width="98.6" height="145.1"/></clipPath>
<g id="quad" clip-path="url(#qc)" fill="none" stroke="#111" stroke-width="1.25" stroke-linecap="round" stroke-linejoin="round">
<path d="M76.5 68 Q72 71 69 76"/>
<path d="M76.5 77.2 Q72 80.2 69 85.2"/>
<path d="M76.5 86.4 Q72 89.4 69 94.4"/>
<path d="M76.5 95.6 Q72 98.6 69 103.6"/>
<path d="M87.22 9.9A12 12 0 0 1 96.83 2.12"/>
<path d="M84.45 7.45A15.5 15.5 0 0 1 95.28 -1.16"/>
<path d="M25.28 45.79A18.5 18.5 0 0 1 49.83 31.62"/>
<path d="M-0 55A5 5 0 0 1 0 65"/>
<path d="M-0 51A9 9 0 0 1 0 69"/>
<path d="M1.04 77.38A31 31 0 0 1 34.7 48.12"/>
<path d="M-3.86 75.86A36 36 0 0 1 32 43"/>
<path d="M1.34 74.4L-3.6 73.65"/>
<path d="M2.15 70.65L-2.67 69.3"/>
<path d="M3.4 67.03L-1.21 65.1"/>
<path d="M5.1 63.6L0.76 61.11"/>
<path d="M7.2 60.4L3.2 57.4"/>
<path d="M9.68 57.48L6.09 54.01"/>
<path d="M12.51 54.89L9.36 51.01"/>
<path d="M15.63 52.67L12.99 48.43"/>
<path d="M19 50.86L16.9 46.32"/>
<path d="M22.57 49.47L21.05 44.71"/>
<path d="M26.28 48.53L25.36 43.62"/>
<path d="M30.08 48.06L29.78 43.07"/>
<path d="M-8.38 71.88A41 41 0 0 1 26.29 38.4"/>
<path d="M-8.38 71.88A2.86 2.86 0 0 1 -6.99 66.33"/>
<path d="M-6.99 66.33A2.86 2.86 0 0 1 -4.85 61.03"/>
<path d="M-4.85 61.03A2.86 2.86 0 0 1 -1.99 56.07"/>
<path d="M-1.99 56.07A2.86 2.86 0 0 1 1.53 51.57"/>
<path d="M1.53 51.57A2.86 2.86 0 0 1 5.65 47.59"/>
<path d="M5.65 47.59A2.86 2.86 0 0 1 10.27 44.23"/>
<path d="M10.27 44.23A2.86 2.86 0 0 1 15.32 41.54"/>
<path d="M15.32 41.54A2.86 2.86 0 0 1 20.7 39.59"/>
<path d="M20.7 39.59A2.86 2.86 0 0 1 26.29 38.4"/>
<path d="M80 39Q88 36 98.5 41"/>
<path d="M82 44Q90 41 98.5 45"/>
<path d="M88 50Q93 47 98.5 49"/>
<path d="M60 20Q59.28 13.25 54 9Q54.72 15.75 60 20Z"/>
<path d="M66 15Q66.26 8.68 62 4Q61.74 10.32 66 15Z"/>
<path d="M72 11Q73.15 5.8 70 1.5Q68.85 6.7 72 11Z"/>
<path d="M17.34 101.41A10 10 0 0 1 23.58 94.6"/>
<path d="M11.55 99.86A16 16 0 0 1 21.53 88.96"/>
<path d="M13.14 99.16a1.8 1.8 0 1 0 3.6 0a1.8 1.8 0 1 0 -3.6 0"/>
<path d="M14.63 96.43a1.8 1.8 0 1 0 3.6 0a1.8 1.8 0 1 0 -3.6 0"/>
<path d="M16.74 94.13a1.8 1.8 0 1 0 3.6 0a1.8 1.8 0 1 0 -3.6 0"/>
<path d="M19.32 92.4a1.8 1.8 0 1 0 3.6 0a1.8 1.8 0 1 0 -3.6 0"/>
<path d="M11.55 99.86A1.92 1.92 0 0 1 12.97 96.3"/>
<path d="M12.97 96.3A1.92 1.92 0 0 1 15.2 93.19"/>
<path d="M15.2 93.19A1.92 1.92 0 0 1 18.11 90.7"/>
<path d="M18.11 90.7A1.92 1.92 0 0 1 21.53 88.96"/>
<path d="M2 88Q10 86 16 92Q18 97 14 101"/>
<path d="M-0 88A12 12 0 0 1 12 100"/>
<path d="M6.5 1Q-5.99 14.5 7.5 27Q19.99 13.5 6.5 1Z"/>
<path d="M6.5 1L7.5 27"/>
<path d="M6.75 7.5L2.49 4.35"/>
<path d="M6.75 7.5L10.76 4.03"/>
<path d="M7 14L0.97 9.55"/>
<path d="M7 14L12.67 9.1"/>
<path d="M7.25 20.5L2.99 17.35"/>
<path d="M7.25 20.5L11.26 17.03"/>
<path d="M1.2 1Q0.5 15 1.5 30"/>
<path d="M13 2.5Q8.5 13 15 20"/>
<path d="M19.5 2.5Q15 13 22 20"/>
<path d="M26 2.5Q21.5 13 29 20"/>
<path d="M32.5 2.5Q28 13 36 20"/>
<path d="M3 1.8Q25 0 36 6Q41 12 43 22"/>
<path d="M28.5 8Q36 1.5 50 1.5"/>
<path d="M31 11Q39 5 50 5"/>
<path d="M30.5 9L40.5 22"/>
<path d="M42.46 9.99a1.9 1.9 0 1 0 3.8 0a1.9 1.9 0 1 0 -3.8 0"/>
<path d="M42.32 13.94a1.9 1.9 0 1 0 3.8 0a1.9 1.9 0 1 0 -3.8 0"/>
<path d="M42.37 17.83a1.9 1.9 0 1 0 3.8 0a1.9 1.9 0 1 0 -3.8 0"/>
<path d="M42.62 21.66a1.9 1.9 0 1 0 3.8 0a1.9 1.9 0 1 0 -3.8 0"/>
<path d="M43.07 25.44a1.9 1.9 0 1 0 3.8 0a1.9 1.9 0 1 0 -3.8 0"/>
<path d="M43.71 29.16a1.9 1.9 0 1 0 3.8 0a1.9 1.9 0 1 0 -3.8 0"/>
<path d="M26.1 51.12Q19.51 46.81 12.18 49.66Q18.76 53.97 26.1 51.12Z"/>
<path d="M26.88 47.44Q21.34 41.85 13.57 43.11Q19.11 48.7 26.88 47.44Z"/>
<path d="M28.41 44Q24.15 37.38 16.29 37Q20.55 43.62 28.41 44Z"/>
<path d="M30.62 40.96Q27.83 33.6 20.22 31.59Q23.01 38.95 30.62 40.96Z"/>
<path d="M33.42 38.44Q32.22 30.66 25.19 27.11Q26.39 34.89 33.42 38.44Z"/>
<path d="M36.68 36.56Q37.12 28.7 30.98 23.77Q30.54 31.63 36.68 36.56Z"/>
<path d="M40.26 35.39Q42.32 27.8 37.35 21.7Q35.28 29.29 40.26 35.39Z"/>
<path d="M44 35Q47.6 28 44 21Q40.4 28 44 35Z"/>
<path d="M47.74 35.39Q52.72 29.29 50.65 21.7Q45.68 27.8 47.74 35.39Z"/>
<path d="M51.32 36.56Q57.46 31.63 57.02 23.77Q50.88 28.7 51.32 36.56Z"/>
<path d="M27.01 53.59A17 17 0 0 1 53.01 38.58"/>
<path d="M11 53A33 33 0 0 1 60.5 24.42"/>
<path d="M6.99 48.43a1.8 1.8 0 1 0 3.6 0a1.8 1.8 0 1 0 -3.6 0"/>
<path d="M8.1 43.12a1.8 1.8 0 1 0 3.6 0a1.8 1.8 0 1 0 -3.6 0"/>
<path d="M10.01 38.03a1.8 1.8 0 1 0 3.6 0a1.8 1.8 0 1 0 -3.6 0"/>
<path d="M12.67 33.29a1.8 1.8 0 1 0 3.6 0a1.8 1.8 0 1 0 -3.6 0"/>
<path d="M16.03 29.02a1.8 1.8 0 1 0 3.6 0a1.8 1.8 0 1 0 -3.6 0"/>
<path d="M19.99 25.3a1.8 1.8 0 1 0 3.6 0a1.8 1.8 0 1 0 -3.6 0"/>
<path d="M24.48 22.24a1.8 1.8 0 1 0 3.6 0a1.8 1.8 0 1 0 -3.6 0"/>
<path d="M29.38 19.9a1.8 1.8 0 1 0 3.6 0a1.8 1.8 0 1 0 -3.6 0"/>
<path d="M34.58 18.33a1.8 1.8 0 1 0 3.6 0a1.8 1.8 0 1 0 -3.6 0"/>
<path d="M2 45Q7.55 42.1 9 36Q3.45 38.9 2 45Z"/>
<path d="M50.6 34a3.4 3.4 0 1 0 6.8 0a3.4 3.4 0 1 0 -6.8 0"/>
<path d="M23.4 38.5a2.6 2.6 0 1 0 5.2 0a2.6 2.6 0 1 0 -5.2 0"/>
<path d="M57.66 32.03A46 46 0 0 1 88.87 5.37"/>
<path d="M53.05 30.07A51 51 0 0 1 87.66 0.51"/>
<path d="M57.66 32.03L53.05 30.07"/>
<path d="M58.94 29.27L54.47 27.02"/>
<path d="M60.39 26.6L56.09 24.06"/>
<path d="M62.03 24.04L57.9 21.22"/>
<path d="M63.82 21.59L59.89 18.5"/>
<path d="M65.78 19.26L62.06 15.92"/>
<path d="M67.88 17.07L64.39 13.49"/>
<path d="M70.13 15.02L66.88 11.22"/>
<path d="M72.5 13.13L69.51 9.12"/>
<path d="M74.99 11.39L72.28 7.19"/>
<path d="M77.6 9.82L75.16 5.46"/>
<path d="M80.3 8.43L78.16 3.91"/>
<path d="M83.09 7.22L81.25 2.57"/>
<path d="M85.95 6.2L84.42 1.44"/>
<path d="M88.87 5.37L87.66 0.51"/>
<path d="M54.11 26.62Q51.91 22.69 47.43 23.21Q49.64 27.14 54.11 26.62Z"/>
<path d="M59.42 18.29Q58 14.01 53.51 13.68Q54.92 17.95 59.42 18.29Z"/>
<path d="M66.21 11.13Q65.64 6.66 61.29 5.47Q61.87 9.94 66.21 11.13Z"/>
<path d="M74.25 5.4Q74.54 0.9 70.5 -1.1Q70.21 3.4 74.25 5.4Z"/>
<path d="M62 21Q68 18 71 21Q73 24 74.6 24Q84 22 91.5 22.5Q97 24 98.5 28"/>
<path d="M64 27Q72 27 78 30Q84 32.7 90 32.5Q95 32 98.5 31.5"/>
<path d="M70 36Q82 34 98.5 37.5"/>
<path d="M74.6 24L71 27.5"/>
<path d="M68 13Q78 11 83 15Q86 19 84 22"/>
<path d="M98.5 8Q95.1 13.4 98.5 18.8Q101.9 13.4 98.5 8Z"/>
<path d="M98.5 19.5Q96.6 23.25 98.5 27Q100.4 23.25 98.5 19.5Z"/>
<path d="M95.5 18.6Q93.69 14.13 89 13Q90.81 17.47 95.5 18.6Z"/>
<path d="M95.5 22Q92.86 17.84 88 17Q90.64 21.16 95.5 22Z"/>
<path d="M92.5 12Q91.5 4.5 98.5 4.3"/>
<path d="M86 23Q92 26 98.5 26"/>
<path d="M80 8Q84 4 88 6"/>
<path d="M31.75 53.28L31.46 51.95L31.32 50.62L31.33 49.28L31.48 47.97L31.77 46.7L32.19 45.47L32.74 44.31L33.4 43.22L34.18 42.23L35.05 41.33L36 40.54L37.02 39.86L38.1 39.31L39.23 38.88L40.38 38.58L41.55 38.41L42.72 38.37L43.87 38.46L44.99 38.67L46.08 38.99L47.11 39.43L48.08 39.98L48.97 40.62L49.77 41.34L50.49 42.14L51.11 43.01L51.62 43.93L52.02 44.88L52.32 45.87L52.5 46.87L52.57 47.87L52.53 48.86L52.39 49.83L52.14 50.77L51.79 51.66L51.36 52.5L50.84 53.27L50.24 53.98L49.58 54.61L48.87 55.15L48.11 55.61L47.31 55.98L46.49 56.25L45.66 56.43L44.82 56.51L44 56.5L43.18 56.4L42.4 56.22L41.65 55.95L40.95 55.61L40.3 55.2L39.7 54.72L39.18 54.19L38.72 53.62L38.33 53.01L38.02 52.37L37.78 51.71L37.63 51.04L37.55 50.36L37.54 49.7L37.61 49.05L37.75 48.42L37.95 47.82L38.21 47.26L38.53 46.74L38.9 46.27L39.31 45.85L39.75 45.49L40.23 45.19L40.72 44.95L41.23 44.76L41.74 44.64L42.25 44.58L42.76 44.58L43.25 44.63L43.72 44.74L44.16 44.89L44.57 45.09L44.95 45.33L45.29 45.61L45.58 45.91L45.84 46.24L46.04 46.58L46.2 46.94L46.32 47.3L46.39 47.66L46.41 48.02L46.4 48.36L46.34 48.69L46.25 49"/>
<path d="M32 62Q27 52 31 42"/>
<path d="M28.56 47.69A15 15 0 0 1 51 36.01"/>
<path d="M73.09 27.36L71.94 27.66L70.7 28.06L69.49 28.54L68.31 29.1L67.18 29.72L66.08 30.41L65.03 31.17L64.02 31.98L63.05 32.86L62.13 33.78L61.25 34.76L60.42 35.79L59.63 36.86L58.89 37.98L58.19 39.14L57.54 40.34L56.94 41.58L56.39 42.86L55.88 44.17L55.43 45.51L55.02 46.88L54.66 48.28L54.36 49.71L54.1 51.17L53.9 52.65L53.75 54.15L53.66 55.67L53.62 57.2L53.64 58.76L53.71 60.33L53.84 61.91L54.03 63.51L54.29 65.11L54.6 66.72L54.97 68.34L55.41 69.96L55.91 71.58L56.48 73.2L57.11 74.82L57.78 76.38"/>
<path d="M74.91 34.64L73.98 34.86L73.2 35.1L72.43 35.4L71.67 35.75L70.93 36.14L70.2 36.59L69.49 37.09L68.8 37.63L68.12 38.23L67.47 38.87L66.83 39.57L66.22 40.3L65.63 41.09L65.07 41.92L64.53 42.79L64.02 43.7L63.55 44.66L63.11 45.65L62.7 46.68L62.32 47.74L61.99 48.84L61.69 49.96L61.43 51.12L61.21 52.3L61.03 53.51L60.9 54.75L60.81 56.01L60.77 57.28L60.77 58.58L60.82 59.89L60.92 61.22L61.07 62.56L61.27 63.91L61.52 65.27L61.83 66.64L62.19 68.02L62.6 69.4L63.08 70.79L63.6 72.18L64.22 73.62"/>
<path d="M74 31L72.96 31.26L71.95 31.58L70.96 31.97L69.99 32.42L69.05 32.93L68.14 33.5L67.26 34.13L66.41 34.81L65.59 35.54L64.8 36.33L64.04 37.16L63.32 38.05L62.63 38.98L61.98 39.95L61.36 40.97L60.78 42.02L60.25 43.12L59.75 44.25L59.29 45.42L58.88 46.62L58.5 47.86L58.18 49.12L57.89 50.42L57.66 51.74L57.47 53.08L57.33 54.45L57.23 55.84L57.19 57.24L57.2 58.67L57.27 60.11L57.38 61.56L57.55 63.03L57.78 64.51L58.06 66L58.4 67.49L58.8 68.99L59.26 70.49L59.78 71.99L60.36 73.5L61 75"/>
<path d="M68.31 29.1L71.67 35.75"/>
<path d="M63.05 32.86L68.12 38.23"/>
<path d="M59.63 36.86L65.63 41.09"/>
<path d="M56.39 42.86L63.11 45.65"/>
<path d="M54.66 48.28L61.69 49.96"/>
<path d="M53.66 55.67L60.81 56.01"/>
<path d="M53.84 61.91L60.92 61.22"/>
<path d="M55.41 69.96L62.19 68.02"/>
<path d="M66.49 74.79L66.39 73.31L66.3 71.87L66.22 70.46L66.16 69.08L66.12 67.72L66.1 66.39L66.09 65.09L66.1 63.82L66.14 62.59L66.19 61.38L66.27 60.21L66.36 59.07L66.48 57.97L66.63 56.9L66.8 55.87L66.99 54.88L67.2 53.92L67.45 53.01L67.71 52.13L68 51.29L68.32 50.49L68.66 49.74L69.02 49.02L69.41 48.34L69.82 47.7L70.27 47.09L70.73 46.52L71.23 45.99L71.76 45.48L72.32 45.01L72.92 44.57L73.55 44.16L74.23 43.77L74.95 43.42L75.72 43.1L76.54 42.81L77.41 42.55L78.34 42.32L79.33 42.13L80.44 41.97"/>
<path d="M60.51 75.21L60.4 73.71L60.31 72.22L60.23 70.75L60.17 69.3L60.12 67.87L60.1 66.46L60.09 65.08L60.1 63.71L60.14 62.37L60.2 61.06L60.28 59.76L60.39 58.49L60.53 57.24L60.69 56.02L60.89 54.82L61.12 53.65L61.38 52.5L61.67 51.38L62 50.28L62.37 49.21L62.79 48.17L63.24 47.15L63.74 46.17L64.29 45.22L64.88 44.3L65.52 43.42L66.22 42.57L66.96 41.77L67.76 41.01L68.6 40.3L69.5 39.64L70.44 39.03L71.43 38.47L72.47 37.96L73.55 37.5L74.68 37.1L75.85 36.75L77.07 36.46L78.32 36.21L79.56 36.03"/>
<path d="M63.5 75L63.39 73.51L63.3 72.05L63.23 70.6L63.17 69.19L63.12 67.79L63.1 66.43L63.09 65.08L63.1 63.77L63.14 62.48L63.2 61.22L63.27 59.99L63.38 58.78L63.51 57.61L63.66 56.46L63.84 55.35L64.05 54.26L64.29 53.21L64.56 52.19L64.86 51.2L65.19 50.25L65.55 49.33L65.95 48.44L66.38 47.59L66.85 46.78L67.35 46L67.89 45.25L68.48 44.55L69.1 43.88L69.76 43.25L70.46 42.66L71.21 42.1L72 41.59L72.83 41.12L73.71 40.69L74.64 40.3L75.61 39.95L76.63 39.65L77.7 39.39L78.83 39.17L80 39"/>
<path d="M66.1 66.39L60.1 66.46"/>
<path d="M66.27 60.21L60.28 59.76"/>
<path d="M67.2 53.92L61.38 52.5"/>
<path d="M69.02 49.02L63.74 46.17"/>
<path d="M71.76 45.48L67.76 41.01"/>
<path d="M74.95 43.42L72.47 37.96"/>
<path d="M76.5 36Q88 35 91 47Q87 42 82 42.5"/>
<path d="M80 39L89 44"/>
<path d="M72 29L75 34"/>
<path d="M28.24 80.37A4 4 0 0 1 33.37 75.24"/>
<path d="M28.02 79.35L23.03 79.78"/>
<path d="M28.37 77.31L23.84 75.2"/>
<path d="M29.71 75.72L26.84 71.63"/>
<path d="M31.44 75.04L30.75 70.09"/>
<path d="M33.04 75.14L34.33 70.31"/>
<path d="M23.54 82.08A9 9 0 0 1 35.08 70.54"/>
<path d="M17.95 80.91a2.2 2.2 0 1 0 4.4 0a2.2 2.2 0 1 0 -4.4 0"/>
<path d="M18.08 76.4a2.2 2.2 0 1 0 4.4 0a2.2 2.2 0 1 0 -4.4 0"/>
<path d="M19.87 72.26a2.2 2.2 0 1 0 4.4 0a2.2 2.2 0 1 0 -4.4 0"/>
<path d="M23.06 69.07a2.2 2.2 0 1 0 4.4 0a2.2 2.2 0 1 0 -4.4 0"/>
<path d="M27.2 67.28a2.2 2.2 0 1 0 4.4 0a2.2 2.2 0 1 0 -4.4 0"/>
<path d="M31.71 67.15a2.2 2.2 0 1 0 4.4 0a2.2 2.2 0 1 0 -4.4 0"/>
<path d="M18.09 84.62A15 15 0 0 1 37.13 64.9"/>
<path d="M18.09 84.62A2.46 2.46 0 0 1 17.02 79.82"/>
<path d="M17.02 79.82A2.46 2.46 0 0 1 17.56 74.94"/>
<path d="M17.56 74.94A2.46 2.46 0 0 1 19.65 70.49"/>
<path d="M19.65 70.49A2.46 2.46 0 0 1 23.06 66.95"/>
<path d="M23.06 66.95A2.46 2.46 0 0 1 27.44 64.71"/>
<path d="M27.44 64.71A2.46 2.46 0 0 1 32.3 64"/>
<path d="M32.3 64A2.46 2.46 0 0 1 37.13 64.9"/>
<path d="M12.97 87.87A21 21 0 0 1 39.18 59.27"/>
<path d="M7.59 86.42a1.9 1.9 0 1 0 3.8 0a1.9 1.9 0 1 0 -3.8 0"/>
<path d="M6.48 80.96a1.9 1.9 0 1 0 3.8 0a1.9 1.9 0 1 0 -3.8 0"/>
<path d="M6.68 75.39a1.9 1.9 0 1 0 3.8 0a1.9 1.9 0 1 0 -3.8 0"/>
<path d="M8.16 70.03a1.9 1.9 0 1 0 3.8 0a1.9 1.9 0 1 0 -3.8 0"/>
<path d="M10.87 65.15a1.9 1.9 0 1 0 3.8 0a1.9 1.9 0 1 0 -3.8 0"/>
<path d="M14.63 61.05a1.9 1.9 0 1 0 3.8 0a1.9 1.9 0 1 0 -3.8 0"/>
<path d="M19.25 57.93a1.9 1.9 0 1 0 3.8 0a1.9 1.9 0 1 0 -3.8 0"/>
<path d="M24.47 55.98a1.9 1.9 0 1 0 3.8 0a1.9 1.9 0 1 0 -3.8 0"/>
<path d="M30 55.3a1.9 1.9 0 1 0 3.8 0a1.9 1.9 0 1 0 -3.8 0"/>
<path d="M35.53 55.93a1.9 1.9 0 1 0 3.8 0a1.9 1.9 0 1 0 -3.8 0"/>
<path d="M7.98 90.2A26.5 26.5 0 0 1 40.19 53.8"/>
<path d="M29.5 104.6A28.5 28.5 0 0 1 72.25 79.92"/>
<path d="M31.33 102.04a2.3 2.3 0 1 0 4.6 0a2.3 2.3 0 1 0 -4.6 0"/>
<path d="M32.4 97.03a2.3 2.3 0 1 0 4.6 0a2.3 2.3 0 1 0 -4.6 0"/>
<path d="M34.48 92.35a2.3 2.3 0 1 0 4.6 0a2.3 2.3 0 1 0 -4.6 0"/>
<path d="M37.49 88.21a2.3 2.3 0 1 0 4.6 0a2.3 2.3 0 1 0 -4.6 0"/>
<path d="M41.3 84.78a2.3 2.3 0 1 0 4.6 0a2.3 2.3 0 1 0 -4.6 0"/>
<path d="M45.73 82.22a2.3 2.3 0 1 0 4.6 0a2.3 2.3 0 1 0 -4.6 0"/>
<path d="M50.61 80.64a2.3 2.3 0 1 0 4.6 0a2.3 2.3 0 1 0 -4.6 0"/>
<path d="M55.7 80.1a2.3 2.3 0 1 0 4.6 0a2.3 2.3 0 1 0 -4.6 0"/>
<path d="M60.79 80.64a2.3 2.3 0 1 0 4.6 0a2.3 2.3 0 1 0 -4.6 0"/>
<path d="M65.67 82.22a2.3 2.3 0 1 0 4.6 0a2.3 2.3 0 1 0 -4.6 0"/>
<path d="M37 104.6A21 21 0 0 1 68.5 86.41"/>
<path d="M39.5 104.6A18.5 18.5 0 0 1 67.25 88.58"/>
<path d="M52.29 102.75Q48.12 96.97 41.36 99.19Q45.53 104.96 52.29 102.75Z"/>
<path d="M53.54 100.59Q52.08 93.62 44.99 92.89Q46.46 99.86 53.54 100.59Z"/>
<path d="M55.56 99.12Q57.06 92.16 50.88 88.61Q49.38 95.57 55.56 99.12Z"/>
<path d="M58 98.6Q62.2 92.85 58 87.1Q53.8 92.85 58 98.6Z"/>
<path d="M60.44 99.12Q66.62 95.57 65.12 88.61Q58.94 92.16 60.44 99.12Z"/>
<path d="M64 104.6Q71.29 94.46 70.5 82Q63.21 92.14 64 104.6Z"/>
<path d="M71 104.6Q77.24 96.34 77 86Q70.76 94.26 71 104.6Z"/>
<path d="M53.5 104.6A4.5 4.5 0 0 1 62.5 104.6"/>
<path d="M76.5 68 A19.5 13 0 0 1 96 55"/>
<path d="M76.5 68 Q81 60 96 59.8"/>
<path d="M76.5 77.2 A19.5 13 0 0 1 96 64.2"/>
<path d="M76.5 77.2 Q81 69.2 96 69"/>
<path d="M76.5 86.4 A19.5 13 0 0 1 96 73.4"/>
<path d="M76.5 86.4 Q81 78.4 96 78.2"/>
<path d="M76.5 95.6 A19.5 13 0 0 1 96 82.6"/>
<path d="M76.5 95.6 Q81 87.6 96 87.4"/>
<path d="M96.5 40L96.5 88"/>
<path d="M98.5 36L98.5 88"/>
<path d="M98.5 44L94.5 49L98.5 54"/>
<path d="M85 104.6Q86 88 98.5 78.7"/>
<path d="M90 104.6Q91 92 98.5 85.5"/>
<path d="M94.5 104.6Q95 96 98.5 92"/>
<path d="M98.5 92L98.5 104.6"/>
<path d="M-0.38 94.72L0.23 94.78L0.78 94.86L1.34 94.97L1.91 95.11L2.5 95.28L3.09 95.48L3.7 95.7L4.31 95.96L4.94 96.23L5.57 96.53L6.21 96.86L6.86 97.2L7.51 97.56L8.17 97.94L8.83 98.34L9.5 98.74L10.18 99.16L10.85 99.59L11.53 100.03L12.22 100.47L12.9 100.92L13.6 101.37L14.29 101.82L14.99 102.27L15.69 102.72L16.39 103.16L17.1 103.59L17.81 104.02L18.52 104.43L19.23 104.83L19.95 105.22L20.68 105.59L21.4 105.94L22.14 106.27L22.87 106.58L23.61 106.87L24.36 107.12L25.11 107.35L25.86 107.55L26.58 107.7" stroke-width="1.2"/>
<path d="M0.38 89.28L1.12 89.4L1.92 89.58L2.71 89.8L3.49 90.05L4.25 90.33L5.01 90.64L5.75 90.98L6.49 91.34L7.21 91.72L7.93 92.12L8.64 92.54L9.34 92.97L10.04 93.42L10.73 93.88L11.42 94.35L12.1 94.82L12.77 95.31L13.45 95.79L14.12 96.28L14.78 96.78L15.45 97.27L16.1 97.76L16.76 98.24L17.41 98.72L18.06 99.19L18.71 99.66L19.35 100.11L19.99 100.55L20.63 100.98L21.27 101.39L21.9 101.78L22.52 102.15L23.15 102.51L23.76 102.84L24.38 103.15L24.99 103.43L25.59 103.69L26.19 103.92L26.79 104.12L27.42 104.3" stroke-width="1.2"/>
<path d="M3.7 95.7L5.75 90.98" stroke-width="1.2"/>
<path d="M7.51 97.56L10.04 93.42" stroke-width="1.2"/>
<path d="M12.22 100.47L14.78 96.78" stroke-width="1.2"/>
<path d="M17.1 103.59L19.35 100.11" stroke-width="1.2"/>
<path d="M21.4 105.94L23.15 102.51" stroke-width="1.2"/>
<path d="M-0.35 102.73L0.29 102.78L0.89 102.85L1.49 102.94L2.1 103.05L2.72 103.18L3.34 103.32L3.97 103.48L4.6 103.65L5.24 103.84L5.89 104.05L6.54 104.27L7.19 104.5L7.85 104.74L8.51 104.99L9.17 105.25L9.84 105.52L10.51 105.8L11.18 106.08L11.86 106.37L12.54 106.66L13.22 106.96L13.91 107.25L14.59 107.55L15.28 107.85L15.98 108.15L16.67 108.44L17.37 108.73L18.07 109.02L18.77 109.3L19.47 109.58L20.18 109.84L20.88 110.1L21.59 110.35L22.3 110.59L23.02 110.81L23.73 111.02L24.45 111.22L25.17 111.4L25.9 111.56L26.6 111.7" stroke-width="1.2"/>
<path d="M0.35 97.27L1.06 97.39L1.81 97.53L2.56 97.7L3.3 97.89L4.03 98.09L4.76 98.32L5.48 98.56L6.2 98.81L6.91 99.08L7.61 99.36L8.31 99.65L9.01 99.95L9.7 100.26L10.39 100.58L11.08 100.9L11.76 101.23L12.44 101.57L13.12 101.91L13.79 102.25L14.46 102.59L15.13 102.93L15.79 103.28L16.46 103.62L17.12 103.96L17.77 104.3L18.43 104.63L19.08 104.95L19.73 105.27L20.38 105.59L21.03 105.89L21.67 106.19L22.32 106.47L22.96 106.75L23.6 107.01L24.23 107.26L24.87 107.5L25.5 107.72L26.13 107.93L26.75 108.12L27.4 108.3" stroke-width="1.2"/>
<path d="M3.97 103.48L5.48 98.56" stroke-width="1.2"/>
<path d="M7.85 104.74L9.7 100.26" stroke-width="1.2"/>
<path d="M12.54 106.66L14.46 102.59" stroke-width="1.2"/>
<path d="M17.37 108.73L19.08 104.95" stroke-width="1.2"/>
<path d="M21.59 110.35L22.96 106.75" stroke-width="1.2"/>
<path d="M-0.32 110.73L0.35 110.78L1 110.84L1.65 110.91L2.3 110.98L2.96 111.05L3.61 111.14L4.27 111.23L4.93 111.32L5.59 111.42L6.26 111.53L6.92 111.64L7.59 111.75L8.25 111.87L8.92 112L9.59 112.12L10.26 112.26L10.93 112.39L11.61 112.53L12.28 112.67L12.95 112.81L13.63 112.95L14.31 113.1L14.98 113.25L15.66 113.39L16.34 113.54L17.02 113.69L17.7 113.84L18.39 114L19.07 114.15L19.75 114.3L20.44 114.45L21.12 114.59L21.81 114.74L22.49 114.89L23.18 115.03L23.87 115.17L24.55 115.31L25.24 115.45L25.93 115.58L26.62 115.71" stroke-width="1.2"/>
<path d="M0.32 105.27L1 105.37L1.7 105.49L2.4 105.61L3.1 105.74L3.79 105.87L4.49 106.01L5.18 106.16L5.87 106.31L6.56 106.47L7.24 106.63L7.93 106.79L8.61 106.96L9.3 107.14L9.98 107.32L10.66 107.5L11.34 107.68L12.02 107.87L12.69 108.06L13.37 108.25L14.05 108.44L14.72 108.64L15.39 108.83L16.07 109.03L16.74 109.23L17.41 109.43L18.08 109.63L18.75 109.83L19.41 110.03L20.08 110.22L20.75 110.42L21.41 110.62L22.08 110.81L22.74 111.01L23.41 111.2L24.07 111.39L24.73 111.57L25.4 111.76L26.06 111.94L26.72 112.12L27.38 112.29" stroke-width="1.2"/>
<path d="M4.27 111.23L5.18 106.16" stroke-width="1.2"/>
<path d="M8.25 111.87L9.3 107.14" stroke-width="1.2"/>
<path d="M12.95 112.81L14.05 108.44" stroke-width="1.2"/>
<path d="M17.7 113.84L18.75 109.83" stroke-width="1.2"/>
<path d="M21.81 114.74L22.74 111.01" stroke-width="1.2"/>
<path d="M-0.29 118.73L0.4 118.78L1.09 118.83L1.79 118.87L2.48 118.9L3.17 118.93L3.87 118.96L4.55 118.98L5.24 119L5.93 119.01L6.61 119.03L7.29 119.04L7.97 119.05L8.65 119.06L9.33 119.07L10.01 119.08L10.69 119.08L11.36 119.09L12.03 119.1L12.7 119.11L13.37 119.12L14.04 119.13L14.71 119.15L15.38 119.17L16.05 119.19L16.71 119.21L17.38 119.24L18.04 119.27L18.7 119.31L19.37 119.35L20.03 119.39L20.69 119.45L21.35 119.5L22.01 119.56L22.67 119.63L23.33 119.71L23.99 119.79L24.65 119.89L25.3 119.98L25.96 120.09L26.63 120.21" stroke-width="1.2"/>
<path d="M0.29 113.27L0.95 113.36L1.61 113.45L2.26 113.54L2.92 113.62L3.58 113.7L4.23 113.77L4.9 113.84L5.56 113.91L6.22 113.97L6.89 114.04L7.56 114.1L8.23 114.16L8.9 114.22L9.57 114.27L10.24 114.33L10.91 114.39L11.59 114.45L12.27 114.51L12.95 114.57L13.63 114.63L14.31 114.69L14.99 114.76L15.67 114.83L16.35 114.9L17.04 114.97L17.72 115.05L18.41 115.14L19.1 115.23L19.78 115.32L20.47 115.42L21.16 115.52L21.85 115.63L22.54 115.75L23.23 115.88L23.92 116.01L24.61 116.15L25.3 116.3L26 116.45L26.69 116.62L27.37 116.79" stroke-width="1.2"/>
<path d="M4.55 118.98L4.9 113.84" stroke-width="1.2"/>
<path d="M8.65 119.06L8.9 114.22" stroke-width="1.2"/>
<path d="M13.37 119.12L13.63 114.63" stroke-width="1.2"/>
<path d="M18.04 119.27L18.41 115.14" stroke-width="1.2"/>
<path d="M22.01 119.56L22.54 115.75" stroke-width="1.2"/>
<path d="M26 104.2L98.5 104.2" stroke-width="1.5"/>
<path d="M27.4 104.2L27.4 116" stroke-width="1.5"/>
<path d="M40 108.9L98.5 108.9" stroke-width="1.5"/>
<path d="M44 106Q52 104 54 107Q55.5 110 52 111.5Q48.5 112 49 108.5"/>
<path d="M41 112.5Q35.5 113 35.5 109Q36.5 105.5 41 106Q45 107 47 105"/>
<path d="M29.9 109.3a1.9 1.9 0 1 0 3.8 0a1.9 1.9 0 1 0 -3.8 0"/>
<path d="M37 115Q31 113.5 30.8 118Q31 121 33.5 120.5"/>
<path d="M31.9 119L31.9 145.2" stroke-width="1.1"/>
<path d="M31.9 133.5Q35 134 34.6 136.8Q34 139.5 31.9 139.5Q29.5 139 29.4 136.5Q29.5 134 31.9 133.5"/>
<path d="M31.9 141L34 145.2M31.9 141L29.8 145.2"/>
<path d="M98.5 105.2L91.5 109.3L98.5 113.4"/>
<path d="M98.5 107.2L95 109.3L98.5 111.4"/>
<path d="M0.44 143.59A27 27 0 0 1 26.46 118.02"/>
<path d="M27 121Q11 124 10 136Q12 142 26 143"/>
<path d="M27 124Q16 127 16 135Q17.5 140 26 141"/>
<path d="M27 127Q21 130 21.5 135Q22.5 138 26 139"/>
<path d="M1.5 145L13.5 136.5M1.5 145L13.5 145M5.5 145L13.5 139.5"/>
<path d="M13.5 136.5Q20 142 27 145"/>
<path d="M27.4 120V145" stroke-width="0.5"/>
</g>
<g id="mand"><use href="#quad"/><use href="#quad" transform="translate(197,0) scale(-1,1)"/><use href="#quad" transform="translate(0,290) scale(1,-1)"/><use href="#quad" transform="translate(197,290) scale(-1,-1)"/></g>
</defs></svg>
<svg class="a" style="left:193px;top:277px" width="197" height="290"><use href="#mand"/></svg>
<svg class="a" style="left:475px;top:277px" width="197" height="290"><use href="#mand"/></svg>
<svg class="a" style="left:757px;top:277px" width="197" height="290"><use href="#mand"/></svg>
<div class="t" style="left:272px;top:413.9px;font-family:'Liberation Serif',serif;font-style:italic;font-size:17px;color:#37358f">Name</div>
<div class="t" style="left:836px;top:413.9px;font-family:'Liberation Serif',serif;font-style:italic;font-size:17px;color:#37358f">Name</div>
<svg class="a" style="left:520px;top:398px" width="108" height="52"><rect x="1" y="0.5" width="105.5" height="50.5" fill="none" stroke="#86b6d6" stroke-width="1.1" stroke-dasharray="4 2.5"/></svg>
<div class="t" style="left:546.6px;top:404.1px;font-family:'Liberation Serif',serif;font-style:italic;font-size:17px;color:#4e4bae">Heather</div>
<div class="t" style="left:548.4px;top:426.5px;font-family:'Liberation Serif',serif;font-style:italic;font-size:17px;color:#4e4bae">Malone</div>
<div class="a" style="left:598.8px;top:423px;width:2px;height:22px;background:#111"></div>
<svg class="a" style="left:566.5px;top:417px" width="7" height="16"><path d="M0.5 0.6H6.5M3.5 0.6V15.2M0.5 15.2H6.5M1.5 9.3H5.5" stroke="#222" stroke-width="1.1"/></svg>
<div class="a" style="left:1192px;top:250px;width:8px;height:382px;background:#cdcdcd"></div>
<svg class="a" style="left:1193px;top:124px" width="7" height="6"><path d="M0.5 5L3.5 1.5L6.5 5" fill="none" stroke="#333" stroke-width="1.5"/></svg>
</body></html>
